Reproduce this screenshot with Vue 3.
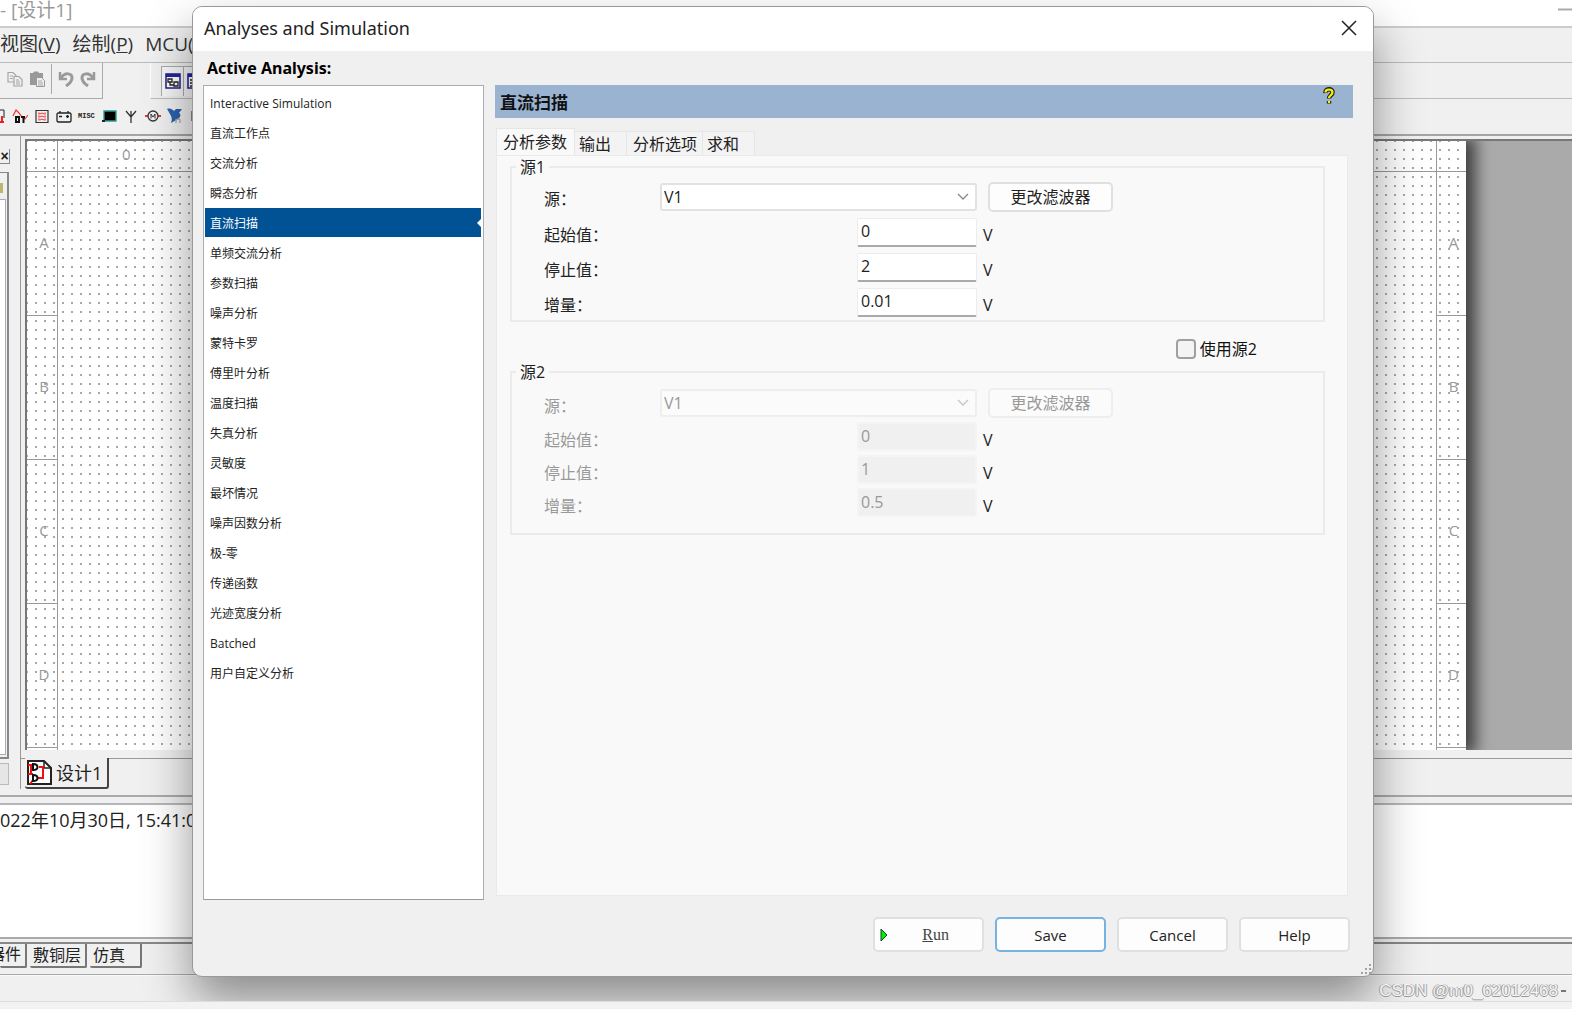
<script setup>
import { ref } from 'vue'

const analyses = [
  'Interactive Simulation', '直流工作点', '交流分析', '瞬态分析', '直流扫描',
  '单频交流分析', '参数扫描', '噪声分析', '蒙特卡罗', '傅里叶分析',
  '温度扫描', '失真分析', '灵敏度', '最坏情况', '噪声因数分析',
  '极-零', '传递函数', '光迹宽度分析', 'Batched', '用户自定义分析',
]
const selected = ref('直流扫描')

const tabs = [
  { name: '分析参数', cls: 'tab-a' },
  { name: '输出', cls: 'tab-b' },
  { name: '分析选项', cls: 'tab-c' },
  { name: '求和', cls: 'tab-b' },
]
const activeTab = ref('分析参数')

const useSecond = ref(false)
const groups = ref([
  {
    id: 's1',
    title: '源1',
    rows: [
      { id: 'start', label: '起始值：', value: '0' },
      { id: 'stop', label: '停止值：', value: '2' },
      { id: 'step', label: '增量：', value: '0.01' },
    ],
  },
  {
    id: 's2',
    title: '源2',
    rows: [
      { id: 'start', label: '起始值：', value: '0' },
      { id: 'stop', label: '停止值：', value: '1' },
      { id: 'step', label: '增量：', value: '0.5' },
    ],
  },
])
const isOff = (g) => g.id === 's2' && !useSecond.value
const zones = ['A', 'B', 'C', 'D']
</script>

<template>
  <div class="app">
    <header class="app-title">
      <span>- [设计1]</span>
      <svg class="min" width="14" height="3" viewBox="0 0 14 3"><path d="M0 1.5H14" stroke="#aaa" stroke-width="2" /></svg>
    </header>
    <nav class="menu">
      <a href="#">视图(<u>V</u>)</a>
      <a href="#">绘制(<u>P</u>)</a>
      <a href="#">MCU(</a>
    </nav>

    <div class="bar1">
      <div class="bar1-edit">
        <svg width="16" height="16" viewBox="0 0 16 16" fill="#efefef" stroke="#a6a6a6" stroke-width="1.2"><path d="M1 1.5h5l3 3v6.500H1z" /><path d="M3 5h3M3 7.500h3" /><path d="M7 5.500h5l3 3v6.500H7z" /><path d="M9 9h3M9 11h4M9 13h4" /></svg>
        <svg width="16" height="16" viewBox="0 0 16 16"><path d="M1 2h3l1-1.500h4L10 2h4v12H1z" fill="#999" /><path d="M7.500 6.500h5l3 3v6h-8z" fill="#eee" stroke="#999" /><path d="M9 10h4M9 12h5M9 14h5" stroke="#aaa" /></svg>
        <i class="split"></i>
        <svg width="16" height="16" viewBox="0 0 16 16" fill="none" stroke="#9a9a9a" stroke-width="3"><path d="M2 1v7h7" stroke-width="2.500" /><path d="M3 7C7 1 14 2 14 7c0 4-3 6-6 8" /></svg>
        <svg width="16" height="16" viewBox="0 0 16 16" fill="none" stroke="#9a9a9a" stroke-width="3"><path d="M14 1v7H7" stroke-width="2.500" /><path d="M13 7C9 1 2 2 2 7c0 4 3 6 6 8" /></svg>
      </div>
      <div class="bar1-view">
        <button class="tool" aria-label="Design toolbox"><svg width="16" height="16" viewBox="0 0 16 16"><path d="M1 1h14v14H1z" fill="#fff" stroke="#1c1c8c" stroke-width="1.500" /><path d="M1 1h14v3H1z" fill="#2424a0" /><path d="M3 6h4v3H3zM9 9h4v4H9zM5 9v3h4" fill="none" stroke="#222" stroke-width="1.300" /></svg></button>
        <button class="tool" aria-label="Spreadsheet"><svg width="16" height="16" viewBox="0 0 16 16"><path d="M1 1h14v14H1z" fill="#fff" stroke="#1c1c8c" stroke-width="1.500" /><path d="M1 1h14v3H1z" fill="#2424a0" /><path d="M3 7h3M3 10h3M3 13h3M8 7h6M8 10h6" stroke="#222" stroke-width="1.500" /></svg></button>
      </div>
    </div>

    <div class="bar2">
      <svg width="6" height="16" viewBox="0 0 6 16"><path d="M0 2h4v8" stroke="#222" fill="none" /><path d="M0 14h4M2 8v6" stroke="#e22" stroke-width="2" /></svg>
      <svg width="16" height="16" viewBox="0 0 16 16" fill="none"><path d="M1 8l3-6 3 3 3 4 3 2 3-4" stroke="#e33" stroke-width="1.200" /><path d="M4 9h3v5H4z" stroke="#111" stroke-width="2" /><path d="M9 9h4M11.500 8v7" stroke="#111" stroke-width="2" /></svg>
      <svg width="16" height="16" viewBox="0 0 16 16" fill="none"><path d="M2 2.500h12v12H2z" stroke="#333" stroke-width="1.200" /><path d="M4 5l2 1 2-1 2 1 2-1M4 8l2 1 2-1 2 1 2-1M4 11l2 1 2-1 2 1 2-1" stroke="#e33" /><path d="M5 4v9M11 4v9" stroke="#e88" /></svg>
      <svg width="16" height="16" viewBox="0 0 16 16" fill="none" stroke="#222" stroke-width="1.300"><path d="M2 5h12l1 1v7l-1 1H2l-1-1V6zM4 5V3M12 5V3M3 8.500h3M10 8.500h3M11.500 7v3" /></svg>
      <b class="misc">MISC</b>
      <svg width="16" height="16" viewBox="0 0 16 16"><path d="M3 3h12v10H3z" fill="#000" stroke="#2a9c93" stroke-width="1.400" /><path d="M1 13h3" stroke="#222" stroke-width="2" /></svg>
      <svg width="16" height="16" viewBox="0 0 16 16" fill="none" stroke="#333" stroke-width="1.300"><path d="M8 3v12M3 3l5 6 5-6" /></svg>
      <svg width="16" height="16" viewBox="0 0 16 16" fill="none"><path d="M0 8h3M13 8h3" stroke="#e33" stroke-width="2" /><circle cx="8" cy="8" r="5" stroke="#333" stroke-width="1.300" /><path d="M6 10.500V6l2 3 2-3v4.500" stroke="#333" /></svg>
      <svg width="16" height="16" viewBox="0 0 16 16"><path d="M0 1c3-1 5 0 7 2l2-2h6l-3 4c2 1 2 4-1 6l-7 4c1-3 1-5 0-7-1-2-2-4-4-7z" fill="#2b62ad" /><path d="M9 15v-4M9 12q4-2 4 0v3" stroke="#aaa" fill="none" stroke-width="1.300" /></svg>
      <i class="bar2-end"></i>
    </div>

    <main class="work">
      <aside class="dock">
        <div class="dock-top"><button class="dock-x" aria-label="Close panel">×</button></div>
        <div class="dock-frame"><i class="chip"></i><div class="dock-tree"></div></div>
        <div class="dock-btn"></div>
      </aside>
      <section class="design">
        <div class="canvas">
          <div class="sheet">
            <div class="corner cell"></div>
            <div class="ruler cell"><span>0</span></div>
            <div class="corner cell last"></div>
            <template v-for="z in zones" :key="z">
              <div class="zone cell">{{ z }}</div>
              <div></div>
              <div class="zone cell last">{{ z }}</div>
            </template>
            <div class="stub"></div><div></div><div class="stub last"></div>
          </div>
        </div>
        <div class="doc-tabs">
          <button class="doc-tab">
            <svg width="26" height="26" viewBox="0 0 26 26" fill="none"><path d="M1 1h16l7 7v16H1z" fill="#fff" stroke="#222" stroke-width="2" /><path d="M17 1v7h7" stroke="#222" stroke-width="1.500" /><path d="M1 5h5M4 5v9M1 14h5M12 7h4v11h-5M3 24l3-4" stroke="#e11" stroke-width="2" /><path d="M6 4c6 0 6 6 0 6zM6 15c6 0 6 6 0 6z" stroke="#111" stroke-width="2" /></svg>
            <span>设计1</span>
          </button>
        </div>
      </section>
    </main>

    <section class="log"><p>022年10月30日, 15:41:0</p></section>
    <div class="log-tabs">
      <button class="lt-cut">器件</button><button class="lt-mid">敷铜层</button><button class="lt-end">仿真</button>
    </div>
    <div class="status"></div>
    <div class="desk"></div>

    <div class="dialog" role="dialog" aria-labelledby="dlg-title">
      <header class="dlg-head">
        <h1 id="dlg-title">Analyses and Simulation</h1>
        <button class="close" aria-label="Close"><svg width="16" height="16" viewBox="0 0 16 16"><path d="M1 1L15 15M15 1L1 15" stroke="#222" stroke-width="1.500" /></svg></button>
      </header>
      <div class="dlg-body">
        <h2 class="active-label">Active Analysis:</h2>
        <div class="cols">
          <ul class="list">
            <li v-for="a in analyses" :key="a" :class="{ on: a === selected }" @click="selected = a">{{ a }}</li>
          </ul>
          <section class="right">
            <div class="banner">
              <h3>直流扫描</h3>
              <svg width="12" height="18" viewBox="0 0 12 18" fill="none"><path d="M2.500 6C2 1 10 1 9.500 5.500 9.500 8 6 8.500 6 11.500M6 14v2.500" stroke="#222" stroke-width="4.500" /><path d="M2.500 5.500C2.500 1.500 9.500 1.500 9.500 5.500 9.500 8 6 8.500 6 11M6 14v2" stroke="#fff200" stroke-width="2.200" /></svg>
            </div>
            <div class="tabs" role="tablist">
              <button v-for="t in tabs" :key="t.name" role="tab" :class="[t.cls, { cur: t.name === activeTab }]" @click="activeTab = t.name">{{ t.name }}</button>
            </div>
            <div class="pane">
              <template v-for="g in groups" :key="g.id">
                <div v-if="g.id === 's2'" class="use">
                  <input id="use2" v-model="useSecond" type="checkbox"><label for="use2">使用源2</label>
                </div>
                <fieldset :class="{ off: isOff(g) }">
                  <legend>{{ g.title }}</legend>
                  <div class="row first">
                    <label :for="g.id + 'src'">源：</label>
                    <div class="field combo">
                      <select :id="g.id + 'src'" :disabled="isOff(g)"><option>V1</option></select>
                      <svg width="12" height="8" viewBox="0 0 12 8" fill="none"><path d="M1 1l5 5 5-5" stroke="currentColor" stroke-width="1.300" /></svg>
                    </div>
                    <button class="btn filter" :disabled="isOff(g)">更改滤波器</button>
                  </div>
                  <div v-for="r in g.rows" :key="r.id" class="row">
                    <label :for="g.id + r.id">{{ r.label }}</label>
                    <div class="field"><input :id="g.id + r.id" v-model="r.value" type="text" :disabled="isOff(g)"></div>
                    <span class="unit">V</span>
                  </div>
                </fieldset>
              </template>
            </div>
          </section>
        </div>
        <footer class="actions">
          <button class="btn run"><svg width="8" height="14" viewBox="0 0 8 14"><path d="M1 1l6 6-6 6z" fill="#0e0" stroke="#143" /></svg><span><u>R</u>un</span></button>
          <button class="btn save">Save</button>
          <button class="btn">Cancel</button>
          <button class="btn">Help</button>
        </footer>
      </div>
      <svg class="grip" width="12" height="12" viewBox="0 0 12 12" fill="#a0a0a0"><path d="M8 0h2v2H8zM8 4h2v2H8zM4 4h2v2H4zM8 8h2v2H8zM4 8h2v2H4zM0 8h2v2H0z" /></svg>
    </div>
    <div class="mark">CSDN @m0_62012468<i></i></div>
  </div>
</template>

<style>
body { margin: 0; }
</style>

<style scoped>
* { box-sizing: border-box; }
.app {
  position: relative; display: flex; flex-direction: column; height: 100vh; min-height: 760px; overflow: hidden;
  background: #f0f0f0; color: #222; font: 16px/20px "Open Sans", "Noto Sans CJK SC", sans-serif;
}
button, input, select { font: inherit; color: inherit; margin: 0; padding: 0; }
button { border: 0; background: none; }
h1, h2, h3, p, ul, fieldset, legend { margin: 0; padding: 0; font-weight: normal; }

.app-title { display: flex; justify-content: space-between; height: 28px; background: #fff; border-bottom: 2px solid #ccc; color: #999; font-size: 19px; line-height: 20px; }
.min { margin-top: 8px; }
.menu { display: flex; gap: 12px; height: 35px; border-bottom: 1px solid #bbb; font-size: 19px; line-height: 32px; white-space: nowrap; }
.menu a { color: #333; text-decoration: none; }

.bar1 { display: flex; height: 36px; gap: 47px; }
.bar1-edit { display: flex; align-items: center; gap: 6px; width: 103px; padding: 0 0 3px 7px; border: solid #aaa; border-width: 0 1px 1px 0; }
.bar1-edit svg { flex: none; }
.split { width: 1px; height: 30px; background: #aaa; }
.bar1-view { display: flex; flex: 1; align-items: center; padding-left: 10px; border-bottom: 1px solid #bbb; border-left: 1px solid #fff; }
.tool { width: 22px; height: 30px; padding-top: 4px; border: solid #aaa; border-width: 1px 0 0 1px; background: #f6f6f6; }
.bar2 { display: flex; align-items: center; gap: 6px; height: 37px; padding-bottom: 2px; border-bottom: 2px solid #a4a4a4; }
.bar2 svg { flex: none; }
.bar2-end { width: 1px; height: 10px; margin-left: 2px; background: #888; }
.misc { width: 17px; font: bold 7px/16px "Liberation Mono", monospace; }

.work { display: flex; flex: 1; min-height: 0; }
.dock { display: flex; flex-direction: column; width: 21px; border-right: 1px solid #999; margin-bottom: 6px; }
.dock-top { height: 36px; padding-top: 9px; }
.dock-x { width: 10px; height: 15px; border: solid #888; border-width: 0 1px 1px 0; font: bold 14px/12px "Liberation Sans", sans-serif; }
.dock-frame { flex: 1; width: 9px; border: solid #888; border-width: 1px 2px 2px 0; }
.chip { display: block; width: 3px; height: 10px; margin: 10px 0 6px; background: #bdb76b; }
.dock-tree { width: 6px; height: calc(100% - 28px); background: #fff; border: solid #aab; border-width: 1px 1px 1px 0; }
.dock-btn { width: 9px; height: 22px; margin: 4px 0; border: 1px solid #bbb; border-left: 0; background: #e6e6e6; }
.design { display: flex; flex: 1; flex-direction: column; min-width: 0; padding-top: 3px; }
.canvas { display: flex; flex: 1; min-height: 0; margin-left: 4px; border: solid #777; border-width: 2px 0 0 2px; background: #aaa; overflow: hidden; }
.sheet {
  display: grid; flex: 1; grid-template-columns: 31px 1fr 26px; grid-template-rows: 31px repeat(4, 144px) 1fr;
  margin-right: 106px; background: radial-gradient(circle at 4px 4px, #a8a8a8 1px, transparent 1px) 5px 5px / 9px 9px content-box, #fff;
  padding-right: 4px; box-shadow: 6px 0 14px 4px #444; color: #999; font-size: 15px;
}
.cell { border-bottom: 1px solid #999; }
.corner, .zone, .stub { border-right: 1px solid #999; }
.cell.last, .stub.last { border-right: 0; border-left: 1px solid #999; margin-right: -4px; }
.zone { display: flex; align-items: center; justify-content: center; padding: 0 0 4px 4px; }
.ruler { padding: 3px 64px; }
.doc-tabs { height: 45px; margin-top: 8px; border-top: 1px solid #999; padding-left: 4px; margin-bottom: -8px; }
.doc-tab { display: flex; align-items: center; gap: 3px; width: 84px; height: 31px; padding-left: 2px; margin-top: -1px; border: solid #444; border-width: 0 2px 2px 0; border-radius: 0 0 3px 3px; background: #f0f0f0; font-size: 18px; white-space: nowrap; }
.doc-tab svg { flex: none; }

.log { height: 144px; border-top: 2px solid #aaa; padding-top: 6px; border-bottom: 2px solid #aaa; background: #f0f0f0; font-size: 18px; }
.log p { height: 134px; border-top: 2px solid #b4b6bc; padding-top: 3px; background: #fff; line-height: 24px; }
.log-tabs { display: flex; height: 33px; margin-top: 3px; border-top: 2px solid #888; border-bottom: 1px solid #aaa; gap: 3px; white-space: nowrap; }
.log-tabs button { height: 24px; border: solid #777; border-width: 0 2px 2px 0; border-radius: 0 0 2px 2px; text-align: left; }
.log-tabs .lt-cut { width: 27px; direction: rtl; overflow: hidden; padding-right: 4px; text-align: right; direction: ltr; display: flex; justify-content: flex-end; }
.lt-mid { width: 57px; padding-left: 3px; }
.lt-end { width: 52px; padding-left: 3px; }
.status { height: 26px; border-top: 1px solid #fafafa; }
.desk { position: relative; z-index: 3; height: 8px; border-top: 1px solid #ddd; background: #f2f2f2; }

.dialog {
  position: absolute; z-index: 2; inset: 6px 198px 32px 192px; display: flex; flex-direction: column;
  border: 1px solid #999; border-radius: 10px; background: #f0f0f0; box-shadow: 0 24px 48px rgba(0, 0, 0, .42);
}
.dlg-head { display: flex; align-items: center; justify-content: space-between; height: 44px; padding: 0 16px 2px 11px; background: #fff; border-radius: 9px 9px 0 0; }
.dlg-head h1 { font: 18px/24px "Noto Sans", sans-serif; color: #222; }
.close { display: flex; }
.dlg-body { display: flex; flex: 1; flex-direction: column; min-height: 0; padding: 0 20px 24px 10px; }
.active-label { height: 34px; padding-left: 4px; font: bold 16px/34px "Noto Sans", sans-serif; color: #000; }
.cols { display: flex; flex: 1; gap: 11px; min-height: 0; }
.list { width: 281px; padding: 2px 2px 0 1px; border: 1px solid #abadb3; border-bottom-color: #999; background: #fff; list-style: none; font-size: 12px; line-height: 31px; overflow: hidden; color: #222; }
.list li { position: relative; height: 30px; padding-left: 5px; }
.list li.on { color: #fff; background: #005295; border-bottom: 1px solid #fff; }
.list li.on::after { content: ''; position: absolute; right: 0; top: 11px; border: solid transparent; border-width: 4px 4px 4px 0; border-right-color: #fff; }
.right { display: flex; flex: 1; flex-direction: column; min-width: 0; }
.banner { display: flex; justify-content: space-between; height: 33px; padding: 2px 18px 0 5px; background: #99b3d1; }
.banner h3 { font-size: 17px; font-weight: bold; line-height: 32px; color: #111; }
.tabs { display: flex; align-items: flex-end; height: 37px; padding-left: 1px; }
.tabs button { height: 24px; border: 1px solid #e6e6e6; border-width: 1px 1px 0 0; background: #f3f3f3; text-align: left; line-height: 22px; white-space: nowrap; }
.tabs .tab-a { width: 79px; padding-left: 6px; }
.tabs .tab-b { width: 52px; padding-left: 4px; }
.tabs .tab-c { width: 76px; padding-left: 6px; }
.tabs .cur { height: 27px; background: #f9f9f9; border-left-width: 1px; }
.pane { flex: 1; min-height: 0; margin: 0 5px 4px 1px; padding: 1px 22px 0 13px; border: 1px solid #eaeaea; background: #f9f9f9; }

fieldset { min-width: 0; height: 165px; padding: 0 0 0 32px; border: 2px solid #ebebeb; }
fieldset legend { padding: 0 4px; margin-left: -28px; line-height: 20px; height: 20px; }
.row { display: flex; height: 35px; align-items: center; }
.row.first { height: 38px; padding-top: 2px; }
.row label { flex: none; width: 116px; padding-top: 4px; }
.field { display: flex; flex: none; width: 317px; justify-content: flex-end; }
.field input { width: 120px; height: 29px; padding: 0 3px 2px; border: 1px solid #ececec; border-bottom: 2px solid #aaa; border-radius: 2px; background: #fff; }
.combo { position: relative; }
.combo select { width: 100%; height: 28px; padding: 0 2px; border: 2px solid #e2e2e2; border-radius: 3px; appearance: none; background: #fff; }
.combo svg { position: absolute; right: 8px; top: 10px; color: #888; pointer-events: none; }
.unit { padding: 4px 0 0 6px; }
.btn { width: 111px; height: 35px; border: 2px solid #e0e0e0; border-radius: 5px; background: #fdfdfd; }
.filter { width: 125px; height: 30px; margin-left: 11px; line-height: 26px; }
.off { height: 173px; }
.off .row { height: 33px; }
.off .row.first { height: 38px; padding-top: 4px; }
.off label, .off select, .off input, .off .filter { color: #999; opacity: 1; }
.off label { padding-top: 6px; }
.off .field input { padding: 0 2px 2px; border: 2px solid #f4f4f4; background: #f0f0f0; }
.off .combo select, .off .filter { border-color: #eee; background: #fbfbfb; }
.off .combo svg { color: #c4c4c4; }
.off .unit { padding-top: 6px; }
.use { display: flex; align-items: center; justify-content: flex-end; gap: 4px; height: 40px; padding: 14px 68px 0 0; }
.use input { width: 20px; height: 20px; margin: 0; appearance: none; border: 2px solid #a0a0a0; border-radius: 4px; background: #f4f4f4; }
.use label { color: #111; }

.actions { display: flex; justify-content: flex-end; gap: 11px; padding: 17px 3px 0 0; font-size: 15px; }
.save { border: 2px solid #74b3e2; }
.run { display: flex; align-items: center; padding: 0 33px 0 5px; justify-content: space-between; font-size: 16px; font-family: "Liberation Serif", serif; color: #444; }
.grip { position: absolute; right: 0; bottom: 0; }
.mark { position: absolute; z-index: 4; right: 6px; bottom: 7px; display: flex; align-items: center; gap: 3px; color: #f4f4f4; font: 17px/22px "Liberation Sans", sans-serif; text-shadow: -1px 0 #999, 1px 0 #aaa, 0 1px #999; }
.mark i { width: 5px; height: 2px; background: #777; }
</style>
